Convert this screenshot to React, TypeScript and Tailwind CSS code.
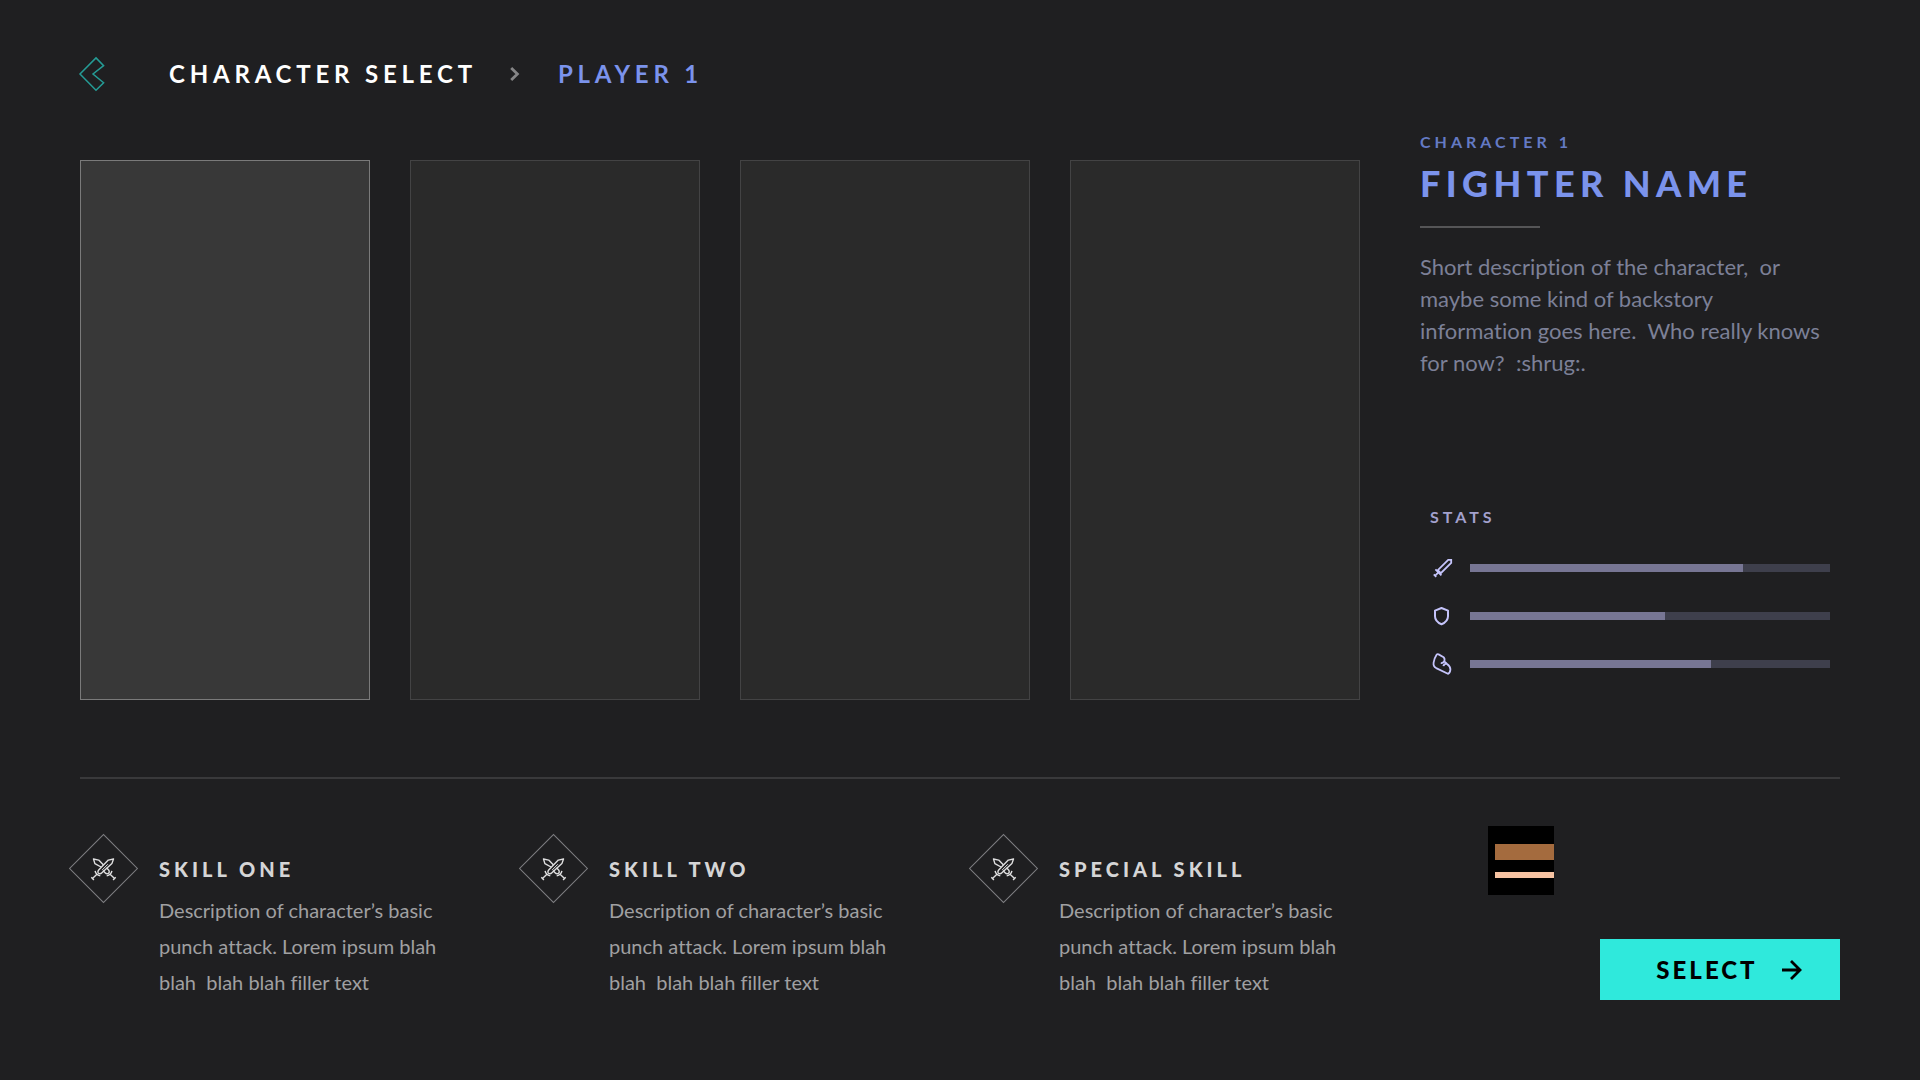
import React from 'react';

type IconProps = { className?: string };

function BackIcon({ className }: IconProps) {
  return (
    <svg viewBox="0 0 26 34" className={className} fill="none" stroke="currentColor" strokeWidth="1.5" aria-hidden="true">
      <path d="M16 .9 23.6 8.6 13 17 23.6 25.7 16 33.2 0 17Z" />
    </svg>
  );
}

function ChevronIcon({ className }: IconProps) {
  return (
    <svg viewBox="0 0 12 16" className={className} fill="none" stroke="currentColor" strokeWidth="2.8" aria-hidden="true">
      <path d="M2.2 2 8.4 8 2.2 14" />
    </svg>
  );
}

function ArrowIcon({ className }: IconProps) {
  return (
    <svg viewBox="0 0 20 20" className={className} fill="none" stroke="currentColor" strokeWidth="2.8" aria-hidden="true">
      <path d="M0 10H18M9 1 18 10 9 19" />
    </svg>
  );
}

function SwordIcon({ className }: IconProps) {
  return (
    <svg viewBox="0 0 24 24" className={className} fill="none" stroke="currentColor" strokeWidth="1.8" aria-hidden="true">
      <path d="M21.2 3.8H18.2L7.8 14.2 10.8 17.2 21.2 6.8Z" />
      <path d="M5.4 13.4 11.4 19.4M8.4 16.4 5 19.8M3.8 18.4 6.2 20.8" />
    </svg>
  );
}

function ShieldIcon({ className }: IconProps) {
  return (
    <svg viewBox="0 0 24 24" className={className} fill="none" stroke="currentColor" strokeWidth="2" strokeLinejoin="round" aria-hidden="true">
      <path d="M11.5 4 18 6.6V12.2C18 15.8 15.4 18.6 11.5 20.2 7.6 18.6 5 15.8 5 12.2V6.6Z" />
    </svg>
  );
}

function ArmIcon({ className }: IconProps) {
  return (
    <svg viewBox="0 0 24 24" className={className} fill="none" stroke="currentColor" strokeWidth="1.8" strokeLinejoin="round" aria-hidden="true">
      <path d="M8.6 2.4 13.6 5.2C14.6 6 14.8 7.4 14.3 9.4L16.8 11.7C19.4 13.6 20.6 15.4 20.4 17.6 20.2 19.6 19.4 21.2 17.9 21.8L6.2 16.1C4 14.8 3.2 13 3.6 10.6 4.2 7.2 5.4 4.6 6.6 2.8 7 2.2 7.8 2 8.6 2.4Z" />
      <path d="M14.3 9.4C13.2 10.8 12 11.2 10.8 11M16.8 11.7C14.6 11.8 13.6 12.6 13.4 14.2" />
    </svg>
  );
}

function CrossedSwordsIcon({ className }: IconProps) {
  return (
    <svg viewBox="0 0 28 28" className={className} fill="none" stroke="currentColor" strokeWidth="1.4" strokeLinejoin="round" aria-hidden="true">
      <path d="M24 3.8 18.8 4.9 9.4 14.6C8 16.2 8.2 17.4 9 18 10 18.8 11.4 18.6 12.4 17.6L22.4 8.4Z" />
      <path d="M11.6 11.8 5.4 8.4 4 3.8 9.2 4.9 14 9.8M17 12.6 18.9 14.6C20.2 16.2 19.8 17.4 19 18 18 18.8 16.6 18.6 15.6 17.6L13.4 15.4" />
      <path d="M12.6 14.9 18.4 9" strokeWidth="1" />
      <path d="M5.6 15.6C6 18 7.4 19.8 10.8 20.6M7.2 19.2 3.2 23M1.8 22 4.4 24.8" />
      <path d="M22.4 15.6C22 18 20.6 19.8 17.2 20.6M20.8 19.2 24.8 23M26.2 22 23.6 24.8" />
    </svg>
  );
}

const characters = ['Character 1', 'Character 2', 'Character 3', 'Character 4'];

const stats = [
  { name: 'Attack', value: 75.8, Icon: SwordIcon },
  { name: 'Defense', value: 54.2, Icon: ShieldIcon },
  { name: 'Strength', value: 66.9, Icon: ArmIcon },
];

const skills = ['SKILL ONE', 'SKILL TWO', 'SPECIAL SKILL'];

function Skill({ title }: { title: string }) {
  return (
    <article className="flex items-start">
      <div className="-ml-3 flex size-[71px] shrink-0 items-center justify-center">
        <div className="flex size-[49px] rotate-45 items-center justify-center border border-[#7e7e82]">
          <CrossedSwordsIcon className="size-7 -rotate-45 text-[#dededf]" />
        </div>
      </div>
      <div className="ml-5 pt-5">
        <h2 className="text-xl font-black leading-8 tracking-[4px] text-[#d5d5d6]">{title}</h2>
        <p className="mt-[7px] whitespace-pre text-xl leading-9 text-[#a0a0a2]">
          {'Description of character’s basic\npunch attack. Lorem ipsum blah\nblah  blah blah filler text'}
        </p>
      </div>
    </article>
  );
}

export default function App() {
  return (
    <div className="min-h-screen bg-[#1f1f21] px-20 pt-14 pb-16 font-['Lato',sans-serif] [font-variant-ligatures:none]">
      <header className="flex h-9 items-center">
        <button type="button" aria-label="Back" className="text-[#259c96]">
          <BackIcon className="h-[34px] w-[26px] overflow-visible" />
        </button>
        <nav aria-label="Breadcrumb" className="ml-[63px] flex items-center text-2xl font-bold tracking-[0.2em]">
          <h1 className="text-white">CHARACTER SELECT</h1>
          <ChevronIcon className="ml-8 h-4 w-3 text-[#858587]" />
          <span className="ml-[37px] text-[#7b93ec]">PLAYER 1</span>
        </nav>
      </header>

      <main>
        <div className="mt-9 flex items-start gap-[60px]">
          <section aria-label="Characters" className="mt-8 grid flex-1 grid-cols-4 gap-10">
            {characters.map((name, i) => (
              <button
                key={name}
                type="button"
                aria-label={name}
                aria-pressed={i === 0}
                className={
                  i === 0
                    ? 'h-[540px] border border-[#7a7a7a] bg-[#383838]'
                    : 'h-[540px] border border-[#434344] bg-[#2a2a2a]'
                }
              />
            ))}
          </section>

          <aside className="w-[420px] shrink-0">
            <p className="text-base font-bold leading-7 tracking-[4px] text-[#647ac4]">CHARACTER 1</p>
            <h2 className="mt-[3px] text-4xl font-black leading-[48px] tracking-[0.15em] text-[#7b93ec]">FIGHTER NAME</h2>
            <div className="mt-[19px] h-0.5 w-[120px] bg-[#555557]" />
            <p className="mt-[23px] whitespace-pre text-[22px] leading-8 text-[#7c8097]">
              {'Short description of the character,  or\nmaybe some kind of backstory\ninformation goes here.  Who really knows\nfor now?  :shrug:.'}
            </p>

            <section className="mt-[124px] px-[10px]">
              <h3 className="text-base font-bold leading-7 tracking-[4px] text-[#a3a1cd]">STATS</h3>
              <ul className="mt-[25px] flex flex-col gap-6">
                {stats.map(({ name, value, Icon }) => (
                  <li key={name} className="flex h-6 items-center gap-4">
                    <Icon className="size-6 shrink-0 text-[#c5c4fb]" />
                    <div
                      role="meter"
                      aria-label={name}
                      aria-valuemin={0}
                      aria-valuemax={100}
                      aria-valuenow={value}
                      className="h-2 flex-1 bg-[#3e3f4c]"
                    >
                      <div className="h-full bg-[#777694]" style={{ width: `${value}%` }} />
                    </div>
                  </li>
                ))}
              </ul>
            </section>
          </aside>
        </div>

        <hr className="mt-[77px] border-t-2 border-[#39393b]" />

        <div className="mt-[47px] flex items-start">
          <section aria-label="Skills" className="mt-[7px] grid w-[1350px] shrink grid-cols-3">
            {skills.map((title) => (
              <Skill key={title} title={title} />
            ))}
          </section>

          <div className="flex flex-1 flex-col pl-[58px]">
            <div className="flex h-[69px] w-[66px] flex-col bg-black pt-[18px] pl-[7px]">
              <div className="h-4 bg-[#a46b3e]" />
              <div className="mt-3 h-1.5 bg-[#f7c3a2]" />
            </div>
            <button
              type="button"
              className="mt-11 flex h-[61px] w-60 items-center justify-center gap-6 self-end bg-[#2fe9dc] pl-[18px] text-2xl font-black tracking-[3px] text-black"
            >
              SELECT
              <ArrowIcon className="size-5" />
            </button>
          </div>
        </div>
      </main>
    </div>
  );
}
